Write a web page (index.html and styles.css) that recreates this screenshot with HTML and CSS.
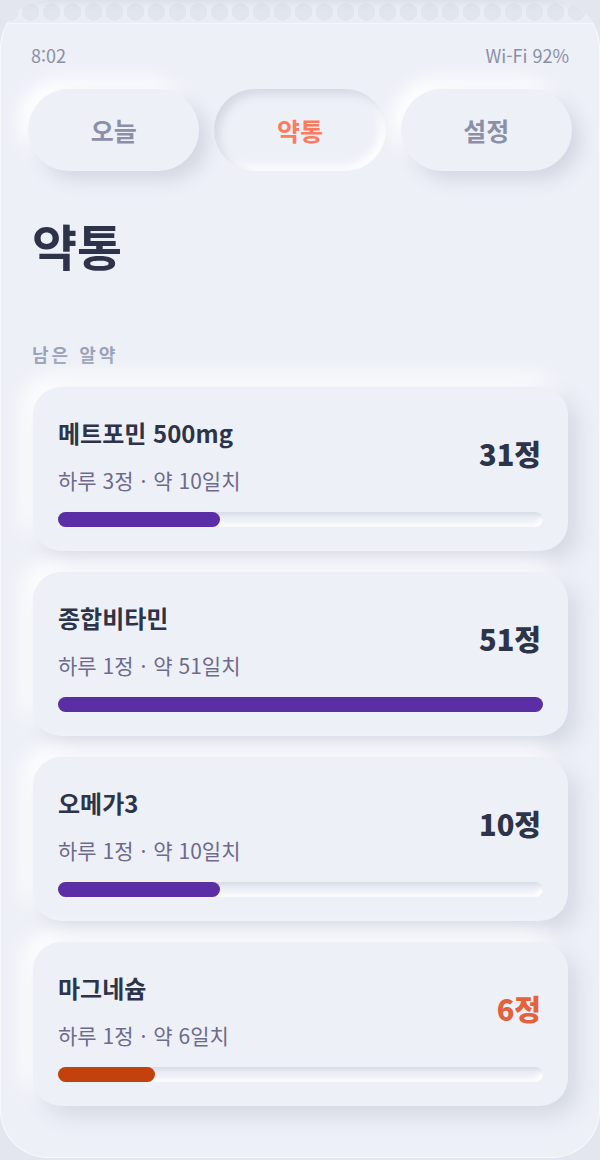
FILE: index.html
```html
<!DOCTYPE html>
<html lang="ko">
<head>
<meta charset="utf-8">
<title>약통</title>
<link rel="stylesheet" href="styles.css">
</head>
<body>
<div class="device">
  <div class="scallop"></div>
  <div class="status">
    <span>8:02</span>
    <span>Wi-Fi 92%</span>
  </div>
  <nav class="tabs">
    <div class="tab">오늘</div>
    <div class="tab active">약통</div>
    <div class="tab">설정</div>
  </nav>
  <h1 class="title">약통</h1>
  <div class="section-label">남은 알약</div>
  <div class="cards">
    <div class="card">
      <div class="card-top">
        <div class="info">
          <div class="name">메트포민 500mg</div>
          <div class="sub">하루 3정<span class="dot">·</span>약 10일치</div>
        </div>
        <div class="count">31정</div>
      </div>
      <div class="track"><div class="fill" style="width:33.3%"></div></div>
    </div>
    <div class="card">
      <div class="card-top">
        <div class="info">
          <div class="name">종합비타민</div>
          <div class="sub">하루 1정<span class="dot">·</span>약 51일치</div>
        </div>
        <div class="count">51정</div>
      </div>
      <div class="track"><div class="fill" style="width:100%"></div></div>
    </div>
    <div class="card">
      <div class="card-top">
        <div class="info">
          <div class="name">오메가3</div>
          <div class="sub">하루 1정<span class="dot">·</span>약 10일치</div>
        </div>
        <div class="count">10정</div>
      </div>
      <div class="track"><div class="fill" style="width:33.3%"></div></div>
    </div>
    <div class="card">
      <div class="card-top">
        <div class="info">
          <div class="name">마그네슘</div>
          <div class="sub">하루 1정<span class="dot">·</span>약 6일치</div>
        </div>
        <div class="count low">6정</div>
      </div>
      <div class="track"><div class="fill low" style="width:20%"></div></div>
    </div>
  </div>
</div>
</body>
</html>
```

FILE: styles.css
```css
* { box-sizing: border-box; }
html, body { margin: 0; padding: 0; }
body {
  width: 600px;
  height: 1160px;
  background: #e3e6ee;
  font-family: "Noto Sans CJK KR", "Noto Sans", sans-serif;
  overflow: hidden;
}
.device {
  width: 600px;
  height: 1158px;
  background: #edf0f7;
  border-radius: 48px;
  overflow: hidden;
  box-shadow: inset 0 0 0 1px rgba(255,255,255,0.6);
  display: flex;
  flex-direction: column;
}
.scallop {
  height: 24px;
  flex: none;
  background-color: #eaedf4;
  background-image: radial-gradient(circle at 10.5px 12px, #e1e5ed 8.5px, transparent 9px);
  background-size: 21px 24px;
  background-position: 20px 0;
  box-shadow: inset 0 8px 8px -6px rgba(200,205,218,0.6);
  border-bottom: 1px solid #f4f6fa;
}
.status {
  display: flex;
  justify-content: space-between;
  padding: 0 31px 0 31px;
  margin-top: 20px;
  font-size: 18px;
  line-height: 22px;
  color: #8a8fa6;
}
.tabs {
  display: grid;
  grid-template-columns: repeat(3, 1fr);
  gap: 15px;
  padding: 0 28px;
  margin-top: 23px;
}
.tab {
  height: 82px;
  border-radius: 41px;
  display: flex;
  align-items: center;
  justify-content: center;
  font-size: 25px;
  font-weight: 700;
  color: #8b90a8;
  background: #edf0f7;
  box-shadow: 9px 9px 18px #d3d7e2, -9px -9px 18px #ffffff;
}
.tab.active {
  color: #ff7a5c;
  box-shadow: inset 5px 5px 10px #d4d8e2, inset -5px -5px 10px #ffffff;
}
.title {
  margin: 45px 0 0;
  padding-left: 32px;
  font-size: 49px;
  line-height: 58px;
  font-weight: 700;
  color: #2d3348;
}
.section-label {
  margin-top: 69px;
  padding-left: 32px;
  font-size: 18px;
  line-height: 22px;
  font-weight: 700;
  letter-spacing: 3px;
  color: #9aa2b7;
}
.cards {
  display: flex;
  flex-direction: column;
  gap: 21px;
  padding: 0 32px 0 33px;
  margin-top: 22px;
}
.card {
  border-radius: 28px;
  background: #edf0f7;
  padding: 31px 25px 24px 25px;
  box-shadow: 10px 10px 22px #d4d8e3, -10px -10px 22px #ffffff;
}
.card-top {
  display: flex;
  align-items: center;
  justify-content: space-between;
}
.info { display: flex; flex-direction: column; gap: 19px; }
.name {
  font-size: 24px;
  line-height: 30px;
  font-weight: 700;
  color: #2d3348;
}
.sub {
  font-size: 21px;
  line-height: 26px;
  color: #6e6a8b;
}
.dot { margin: 0 7px; }
.count {
  font-size: 29px;
  font-weight: 800;
  color: #2d3348;
  padding-right: 2px;
  padding-bottom: 6px;
}
.count.low { color: #e3623b; }
.track {
  margin-top: 19px;
  height: 15px;
  border-radius: 8px;
  background: #edf0f7;
  box-shadow: inset 3px 3px 5px #d6dae4, inset -3px -3px 5px #ffffff;
}
.fill {
  height: 100%;
  border-radius: 8px;
  background: #5b2ea6;
}
.fill.low { background: #c2410c; }
```
